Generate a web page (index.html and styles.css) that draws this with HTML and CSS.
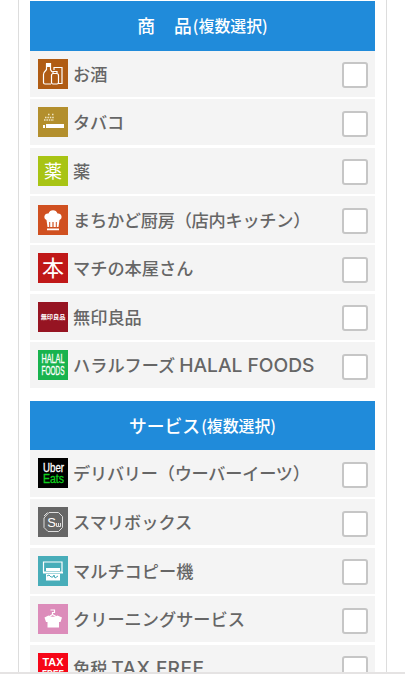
FILE: index.html
```html
<!DOCTYPE html>
<html lang="ja">
<head>
    <meta charset="UTF-8">
    <meta name="viewport" content="width=device-width, initial-scale=1.0">
    <title>店舗検索</title>
    <link rel="stylesheet" href="styles.css">
</head>
<body>
    <div class="container">
        <section class="group">
            <h2><span class="wide">商</span>品<small>(複数選択)</small></h2>
            <ul>
                <li><label>
                    <svg class="icon sake" viewBox="0 0 30 30">
                        <path class="line" d="M8.500 4.500h4v6l1.500 2.500M8.500 4.500v6c-2 2-3 3-3 5v8q0 1.500 1.500 1.500h6M8.500 7.500h4M16 11V8.500h8v16h-4M13.500 16.500q0-2 2-2h3q2 0 2 2v7q0 1.500-1.500 1.500h-4q-1.500 0-1.500-1.500zM15 14.500v-2h4v2"/>
                        <path class="fill" d="M8 4h5v4H8z"/>
                    </svg>
                    <span class="name">お酒</span><input type="checkbox">
                </label></li>
                <li><label>
                    <svg class="icon tobacco" viewBox="0 0 30 30">
                        <path class="fill" d="M5 18h2v3H5zM8 17h18v4H8z"/>
                        <path class="dots" d="M6 13h10M7 10.500h9M10 7.500h2M14 7.500h2"/>
                    </svg>
                    <span class="name tight">タバコ</span><input type="checkbox">
                </label></li>
                <li><label>
                    <svg class="icon medicine" viewBox="0 0 30 30">
                        <text x="15" y="21.500" font-size="18">薬</text>
                    </svg>
                    <span class="name">薬</span><input type="checkbox">
                </label></li>
                <li><label>
                    <svg class="icon kitchen" viewBox="0 0 30 30">
                        <path class="fill" d="M9.500 22L8.500 15C5 13.500 6 8 10.500 8.500c1-4.500 8-4.500 9 0 4.500-.5 5.500 5 2 6.500l-1 7h-1.700v-5h-1v5h-2.200v-5h-1.200v5h-2.200v-5h-1v5zM9 23.500h12v1.700H9z"/>
                    </svg>
                    <span class="name tight">まちかど厨房（店内キッチン）</span><input type="checkbox">
                </label></li>
                <li><label>
                    <svg class="icon book" viewBox="0 0 30 30">
                        <text x="15" y="23" font-size="22">本</text>
                    </svg>
                    <span class="name">マチの本屋さん</span><input type="checkbox">
                </label></li>
                <li><label>
                    <svg class="icon muji" viewBox="0 0 30 30">
                        <text class="bold" x="15" y="17.300" font-size="6.200">無印良品</text>
                    </svg>
                    <span class="name">無印良品</span><input type="checkbox">
                </label></li>
                <li><label>
                    <svg class="icon halal" viewBox="0 0 30 30">
                        <text class="latin thick" x="15" y="13" font-size="12" textLength="23" lengthAdjust="spacingAndGlyphs">HALAL</text>
                        <text class="latin thick" x="15" y="24.500" font-size="12" textLength="23" lengthAdjust="spacingAndGlyphs">FOODS</text>
                    </svg>
                    <span class="name">ハラルフーズ <span class="en">HALAL FOODS</span></span><input type="checkbox">
                </label></li>
            </ul>
        </section>

        <section class="group">
            <h2>サービス<small>(複数選択)</small></h2>
            <ul>
                <li><label>
                    <svg class="icon uber" viewBox="0 0 30 30">
                        <text class="latin thick" x="15.500" y="13.500" font-size="12" textLength="21" lengthAdjust="spacingAndGlyphs">Uber</text>
                        <text class="latin thick green" x="15.500" y="24.500" font-size="12" textLength="21" lengthAdjust="spacingAndGlyphs">Eats</text>
                    </svg>
                    <span class="name tight">デリバリー（ウーバーイーツ）</span><input type="checkbox">
                </label></li>
                <li><label>
                    <svg class="icon smari" viewBox="0 0 30 30">
                        <path class="line thin" d="M11 5.500h9.500l4 4v11l-4 4H10l-4-4V11zM6 9l3.500-3.500"/>
                        <text class="latin" x="13.500" y="20" font-size="13">S</text>
                        <path class="line thin" d="M18.500 16v3.500h2V16M20.500 19.500h2V16"/>
                    </svg>
                    <span class="name">スマリボックス</span><input type="checkbox">
                </label></li>
                <li><label>
                    <svg class="icon copy" viewBox="0 0 30 30">
                        <path class="line" d="M5.500 6h18.500v10H5.500z"/>
                        <path class="fill" d="M8 12h14v3H8zM5 16h20v1.500H5zM8 18h14v6.500H8z"/>
                        <path class="detail" d="M9 20l2-1 2 2h2l1-2 1 3 3-2"/>
                    </svg>
                    <span class="name">マルチコピー機</span><input type="checkbox">
                </label></li>
                <li><label>
                    <svg class="icon cleaning" viewBox="0 0 30 30">
                        <path class="line" d="M12.500 6h4v2.500h-2V10.500l-3 2M14.500 10.500l3.500 2"/>
                        <path class="fill" d="M10.500 11.500q4.500 2.500 9 0l4.500 2-1.500 4.500H21v5.500H9.500v-5.500H8l-1.500-4.500z"/>
                    </svg>
                    <span class="name">クリーニングサービス</span><input type="checkbox">
                </label></li>
                <li><label>
                    <svg class="icon tax" viewBox="0 0 30 30">
                        <text class="latin bold" x="15" y="13" font-size="11" textLength="21" lengthAdjust="spacingAndGlyphs">TAX</text>
                        <text class="latin bold" x="15" y="25" font-size="11" textLength="22" lengthAdjust="spacingAndGlyphs">FREE</text>
                    </svg>
                    <span class="name">免税 <span class="en loose">TAX FREE</span></span><input type="checkbox">
                </label></li>
            </ul>
        </section>
    </div>
    <div class="bottom-line"></div>
</body>
</html>
```

FILE: styles.css
```css
* {
    box-sizing: border-box;
}
body {
    margin: 0;
    height: 674px;
    overflow: hidden;
    background: #fff;
    font-family: "Noto Sans CJK JP", sans-serif;
    color: #666;
}
.container {
    height: 674px;
    margin: 0 18px;
    padding: 1px 11px 0;
    border-left: 1px solid #ddd;
    border-right: 1px solid #ddd;
    overflow: hidden;
}
.group {
    margin-bottom: 12.300px;
}
h2 {
    display: flex;
    align-items: center;
    justify-content: center;
    height: 49.600px;
    margin: 0;
    padding-bottom: 2px;
    background: #208bda;
    color: #fff;
    font-size: 17.800px;
    font-weight: 500;
}
h2 .wide {
    margin-right: 19px;
}
h2 small {
    margin: 2px 0 0 1px;
    font-size: 15.900px;
    font-weight: 500;
}
ul {
    margin: 0;
    padding: 0;
    list-style: none;
}
li {
    height: 46.300px;
    margin-bottom: 2.300px;
    background: #f4f4f4;
}
li:last-child {
    margin-bottom: 0;
}
label {
    display: flex;
    align-items: center;
    height: 100%;
    padding: 0 7px 0 8px;
}
.icon {
    flex: none;
    width: 30px;
    height: 30px;
}
.name {
    flex: 1;
    margin-left: 5px;
    font-size: 17.200px;
    font-weight: 500;
    line-height: 26px;
    white-space: nowrap;
}
.tight {
    letter-spacing: -0.250px;
}
.en {
    font-family: Inter, sans-serif;
    font-size: 19.200px;
    line-height: 20px;
}
.loose {
    letter-spacing: 0.400px;
}
input {
    appearance: none;
    flex: none;
    width: 26px;
    height: 26px;
    margin: 3px 0 0;
    border: 2px solid #c6c6c6;
    border-radius: 3px;
    background: #fff;
}
.icon text {
    fill: #fff;
    text-anchor: middle;
    font-weight: 400;
}
.icon .latin {
    font-family: "Liberation Sans", sans-serif;
}
.icon .thick {
    stroke: #fff;
    stroke-width: 0.300;
}
.icon .bold {
    font-weight: bold;
}
.icon .green {
    fill: #0fd01e;
    stroke: #0fd01e;
}
.line {
    fill: none;
    stroke: #fff;
    stroke-width: 1.200;
}
.thin {
    stroke: #ddd;
    stroke-width: 1;
}
.fill {
    fill: #fff;
}
.dots {
    stroke: #efe5c4;
    stroke-width: 1.400;
    stroke-dasharray: 1.500 0.900;
}
.detail {
    fill: none;
    stroke: #48adb9;
}
.sake {
    background: #b05c14;
}
.tobacco {
    background: #b38f2d;
}
.medicine {
    background: #a8c414;
}
.kitchen {
    background: #d05020;
}
.book {
    background: #c01818;
}
.muji {
    background: #961422;
}
.halal {
    background: #18b34e;
}
.uber {
    background: #000;
}
.smari {
    background: #666;
}
.copy {
    background: #48adb9;
}
.cleaning {
    background: #dc8cba;
}
.tax {
    background: #f60618;
}
.bottom-line {
    position: absolute;
    left: 0;
    right: 0;
    top: 672px;
    height: 2px;
    background: #e5e3e3;
}
```
